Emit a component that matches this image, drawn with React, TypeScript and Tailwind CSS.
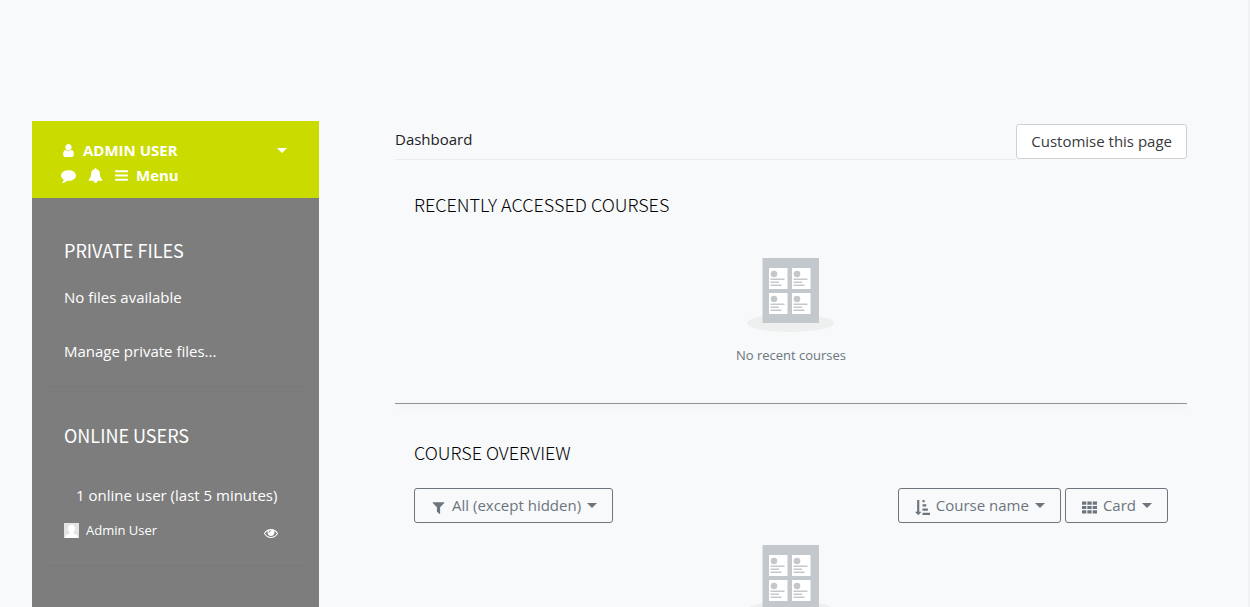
import type { ReactNode } from "react";

const PATHS = {
  user: "M1536 1399q0 109-62.5 187t-150.5 78h-854q-88 0-150.5-78t-62.5-187q0-85 8.5-160.5t31.5-152 58.5-131 94-89 134.5-34.5q131 128 313 128t313-128q76 0 134.5 34.5t94 89 58.5 131 31.5 152 8.5 160.5zm-256-887q0 159-112.5 271.5t-271.5 112.5-271.5-112.5-112.5-271.5 112.5-271.5 271.5-112.5 271.5 112.5 112.5 271.5z",
  bars: "M1664 1344v128q0 26-19 45t-45 19h-1408q-26 0-45-19t-19-45v-128q0-26 19-45t45-19h1408q26 0 45 19t19 45zm0-512v128q0 26-19 45t-45 19h-1408q-26 0-45-19t-19-45v-128q0-26 19-45t45-19h1408q26 0 45 19t19 45zm0-512v128q0 26-19 45t-45 19h-1408q-26 0-45-19t-19-45v-128q0-26 19-45t45-19h1408q26 0 45 19t19 45z",
  filter: "M1595 295q17 41-14 70l-493 493v742q0 42-39 59-13 5-25 5-27 0-45-19l-256-256q-19-19-19-45v-486l-493-493q-31-29-14-70 17-39 59-39h1280q42 0 59 39z",
  comment: "M1792 896q0 174-120 321.5t-326 233-450 85.5q-70 0-145-8-198 175-460 242-49 14-114 22-17 2-30.5-9t-17.5-29v-1q-3-4-.5-12t2-10 4.5-9.5l6-9 7-8.5 8-9q7-8 31-34.5t34.5-38 31-39.5 32.5-51 27-59 26-76q-157-89-247.5-220t-90.5-281q0-130 71-248.5t191-204.5 286-136.5 348-50.5 348 50.5 286 136.5 191 204.5 71 248.5z",
  bell: "M912 1696q0-16-16-16-59 0-101.5-42.5t-42.5-101.5q0-16-16-16t-16 16q0 73 51.5 124.5t124.5 51.5q16 0 16-16zm816-288q0 52-38 90t-90 38h-448q0 106-75 181t-181 75-181-75-75-181h-448q-52 0-90-38t-38-90q50-42 91-88t85-119.5 74.5-158.5 50-206 19.5-260q0-152 117-282.5t307-158.5q-8-19-8-39 0-40 28-68t68-28 68 28 28 68q0 20-8 39 190 28 307 158.5t117 282.5q0 139 19.5 260t50 206 74.5 158.5 85 119.5 91 88z",
  eye: "M1664 960q-152-236-381-353 61 104 61 225 0 185-131.5 316.5t-316.5 131.5-316.5-131.5-131.5-316.5q0-121 61-225-229 117-381 353 133 205 333.5 326.5t434.5 121.5 434.5-121.5 333.5-326.5zm-720-384q0-20-14-34t-34-14q-125 0-214.5 89.5t-89.5 214.5q0 20 14 34t34 14 34-14 14-34q0-86 61-147t147-61q20 0 34-14t14-34zm848 384q0 34-20 69-140 230-376.5 368.5t-499.5 138.5-499.5-139-376.5-368q-20-35-20-69t20-69q140-229 376.5-368t499.5-139 499.5 139 376.5 368q20 35 20 69z",
  sort: "M736 1440q0 12-10 24l-319 319q-10 9-23 9-12 0-23-9l-320-320q-15-16-7-35 8-20 30-20h192V32q0-14 9-23t23-9h192q14 0 23 9t9 23v1376h192q14 0 23 9t9 23zM896 0h256v256H896zM896 512h448v256H896zM896 1024h640v256H896zM896 1536h896v256H896z",
  grid: "M0 192h512v384H0zM640 192h512v384H640zM1280 192h512v384h-512zM0 704h512v384H0zM640 704h512v384H640zM1280 704h512v384h-512zM0 1216h512v384H0zM640 1216h512v384H640zM1280 1216h512v384h-512z",
};

function Icon({ name, className }: { name: keyof typeof PATHS; className: string }) {
  return (
    <svg viewBox="0 0 1792 1792" fill="currentColor" aria-hidden="true" className={`shrink-0 ${className}`}>
      <path d={PATHS[name]} />
    </svg>
  );
}

function Caret() {
  return (
    <svg viewBox="0 0 10 5" fill="currentColor" aria-hidden="true" className="h-[5px] w-[10px] shrink-0">
      <path d="M0 0h10L5 5z" />
    </svg>
  );
}

function Heading({ light = false, children }: { light?: boolean; children: ReactNode }) {
  return (
    <h2
      className={`font-['Noto_Sans_CJK_SC',sans-serif] text-[18px] leading-6 ${
        light ? "font-light text-black" : "font-normal"
      }`}
    >
      {children}
    </h2>
  );
}

function MenuButton({ icon, children }: { icon: keyof typeof PATHS; children: ReactNode }) {
  return (
    <button
      type="button"
      className="flex h-[35px] items-center rounded-[3px] border border-[#6c757d] pr-[15px] pl-4 text-[15px] text-[#6c757d]"
    >
      <Icon name={icon} className="mt-1 mr-1.5 size-[15px]" />
      <span className="mr-1.5">{children}</span>
      <Caret />
    </button>
  );
}

function CourseCard({ x, y }: { x: number; y: number }) {
  return (
    <g transform={`translate(${x} ${y})`}>
      <path fill="#fff" d="M0 0h18.500v21H0z" />
      <circle cx="5" cy="6" r="3.3" fill="#c3c8cd" />
      <path fill="#c3c8cd" d="M1.5 10.5h14V12h-14zM1.5 13.5h8.5V15H1.5zM1.5 16.5h11V18h-11z" />
    </g>
  );
}

function NoCourses() {
  return (
    <svg viewBox="0 0 88 74" className="h-[74px] w-[88px]" role="img" aria-label="Courses">
      <ellipse cx="43.500" cy="65" rx="43.500" ry="9" fill="#eeefef" />
      <path fill="#c3c8cd" d="M15.500 0h56.500v65H15.500z" />
      <CourseCard x={22} y={10} />
      <CourseCard x={45} y={10} />
      <CourseCard x={22} y={35} />
      <CourseCard x={45} y={35} />
    </svg>
  );
}

export default function App() {
  return (
    <div className="flex h-screen items-stretch overflow-hidden border-r-2 border-[#f1f2f4] bg-[#f8f9fb] pt-[121px] pr-[61px] pl-8 font-['Open_Sans',sans-serif] text-[15px] leading-[25px] text-[#1d2125]">
      <aside className="w-[287px] shrink-0 bg-[#7d7d7d] text-white">
        <header className="bg-[#cadb00] pt-[17px] pr-8 pb-[10px] pl-[29px] font-bold">
          <button type="button" className="flex w-full items-center text-left">
            <Icon name="user" className="mr-[7px] size-[15px]" />
            <span className="grow">ADMIN USER</span>
            <Caret />
          </button>
          <nav className="flex items-center">
            <button type="button" aria-label="Messages" className="mr-3">
              <Icon name="comment" className="size-[15px]" />
            </button>
            <button type="button" aria-label="Notifications" className="mr-[11px]">
              <Icon name="bell" className="size-[15px]" />
            </button>
            <button type="button" className="flex items-center">
              <Icon name="bars" className="mr-[7px] size-[15px]" />
              Menu
            </button>
          </nav>
        </header>

        <section className="px-8 pt-10">
          <Heading>PRIVATE FILES</Heading>
          <p className="mt-[23px]">No files available</p>
          <a href="#files" className="mt-[29px] block">
            Manage private files...
          </a>
        </section>
        <hr className="mx-4 mt-[22px] border-[#797979] shadow-[0_2px_6px_rgba(0,0,0,0.06)]" />

        <section className="px-8 pt-9">
          <Heading>ONLINE USERS</Heading>
          <p className="mt-9 pl-3">1 online user (last 5 minutes)</p>
          <div className="mt-[10px] flex items-center pr-[9px]">
            <svg viewBox="0 0 15 15" className="mr-[7px] size-[15px]" aria-hidden="true">
              <path fill="#e4e4e4" d="M0 0h15v15H0z" />
              <path fill="#fff" d="M4 5.5a3.5 3.7 0 0 1 7 0c0 2-.8 3-1.5 3.7v1.2l4 2V15h-12v-2.600l4-2V9.200C4.800 8.500 4 7.500 4 5.500z" />
            </svg>
            <a href="#profile" className="grow text-[13px]">
              Admin User
            </a>
            <button type="button" aria-label="Hide online status" className="pt-1">
              <Icon name="eye" className="size-[14px]" />
            </button>
          </div>
        </section>
        <hr className="mx-4 mt-[22px] border-[#797979] shadow-[0_2px_6px_rgba(0,0,0,0.06)]" />
      </aside>

      <main className="ml-[76px] min-w-0 grow">
        <div className="flex items-start pt-[3px]">
          <nav aria-label="Breadcrumb" className="grow border-b border-[#e9ebed] pt-[3px] pb-[7px]">
            <a href="#dashboard">Dashboard</a>
          </nav>
          <button
            type="button"
            className="h-[35px] shrink-0 rounded-[3px] border border-[#ced1d4] bg-white px-[14px] text-[15px] text-[#373a3c]"
          >
            Customise this page
          </button>
        </div>

        <section className="pt-8">
          <div className="px-[19px]">
            <Heading light>RECENTLY ACCESSED COURSES</Heading>
          </div>
          <div className="mt-[42px] flex flex-col items-center">
            <NoCourses />
            <p className="mt-3 text-[13px] leading-[22px] text-[#6c757d]">No recent courses</p>
          </div>
        </section>
        <hr className="mt-[37px] border-[#8f9397] shadow-[0_2px_6px_rgba(0,0,0,0.1)]" />

        <section className="px-[19px] pt-9">
          <Heading light>COURSE OVERVIEW</Heading>
          <div className="mt-6 flex items-center justify-between">
            <MenuButton icon="filter">All (except hidden)</MenuButton>
            <div className="flex gap-1">
              <MenuButton icon="sort">Course name</MenuButton>
              <MenuButton icon="grid">Card</MenuButton>
            </div>
          </div>
          <div className="mt-[22px] flex justify-center">
            <NoCourses />
          </div>
        </section>
      </main>
    </div>
  );
}
